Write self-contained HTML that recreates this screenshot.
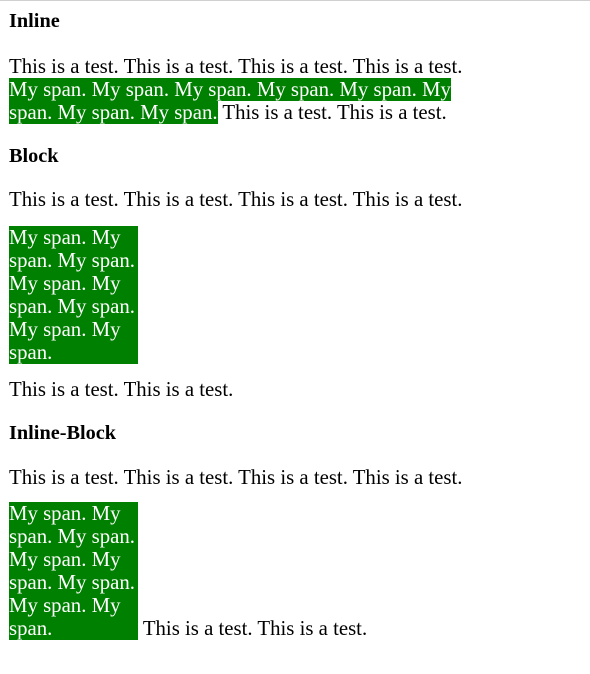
<!DOCTYPE html>
<html><head><style>
html,body{margin:0;padding:0;background:#fff;width:590px;height:674px;overflow:hidden}
body{border-top:1px solid #d0d0d0;box-sizing:border-box;position:relative;font-family:"Liberation Serif",serif;font-size:20.8px;line-height:23px;color:#000}
.a{position:absolute;left:9px;white-space:nowrap}
h3{margin:0;font-size:20.3px;font-weight:bold}
.g{background:#008000;color:#fff}
.blk{background:#008000;color:#fff;width:129px;white-space:normal;display:block}
.ib{background:#008000;color:#fff;width:129px;white-space:normal;display:inline-block;vertical-align:baseline}
</style></head><body>
<div class="a" style="top:9px"><h3>Inline</h3></div>
<div class="a" style="top:54px">This is a test. This is a test. This is a test. This is a test.<br><span class="g">My span. My span. My span. My span. My span. My<br>span. My span. My span.</span> This is a test. This is a test.</div>
<div class="a" style="top:144px"><h3>Block</h3></div>
<div class="a" style="top:187px">This is a test. This is a test. This is a test. This is a test.</div>
<div class="a" style="top:225px"><span class="blk">My span. My span. My span. My span. My span. My span. My span. My span.</span></div>
<div class="a" style="top:377px">This is a test. This is a test.</div>
<div class="a" style="top:421px"><h3>Inline-Block</h3></div>
<div class="a" style="top:465px">This is a test. This is a test. This is a test. This is a test.</div>
<div class="a" style="top:501px"><span class="ib">My span. My span. My span. My span. My span. My span. My span. My span.</span> This is a test. This is a test.</div>
</body></html>
